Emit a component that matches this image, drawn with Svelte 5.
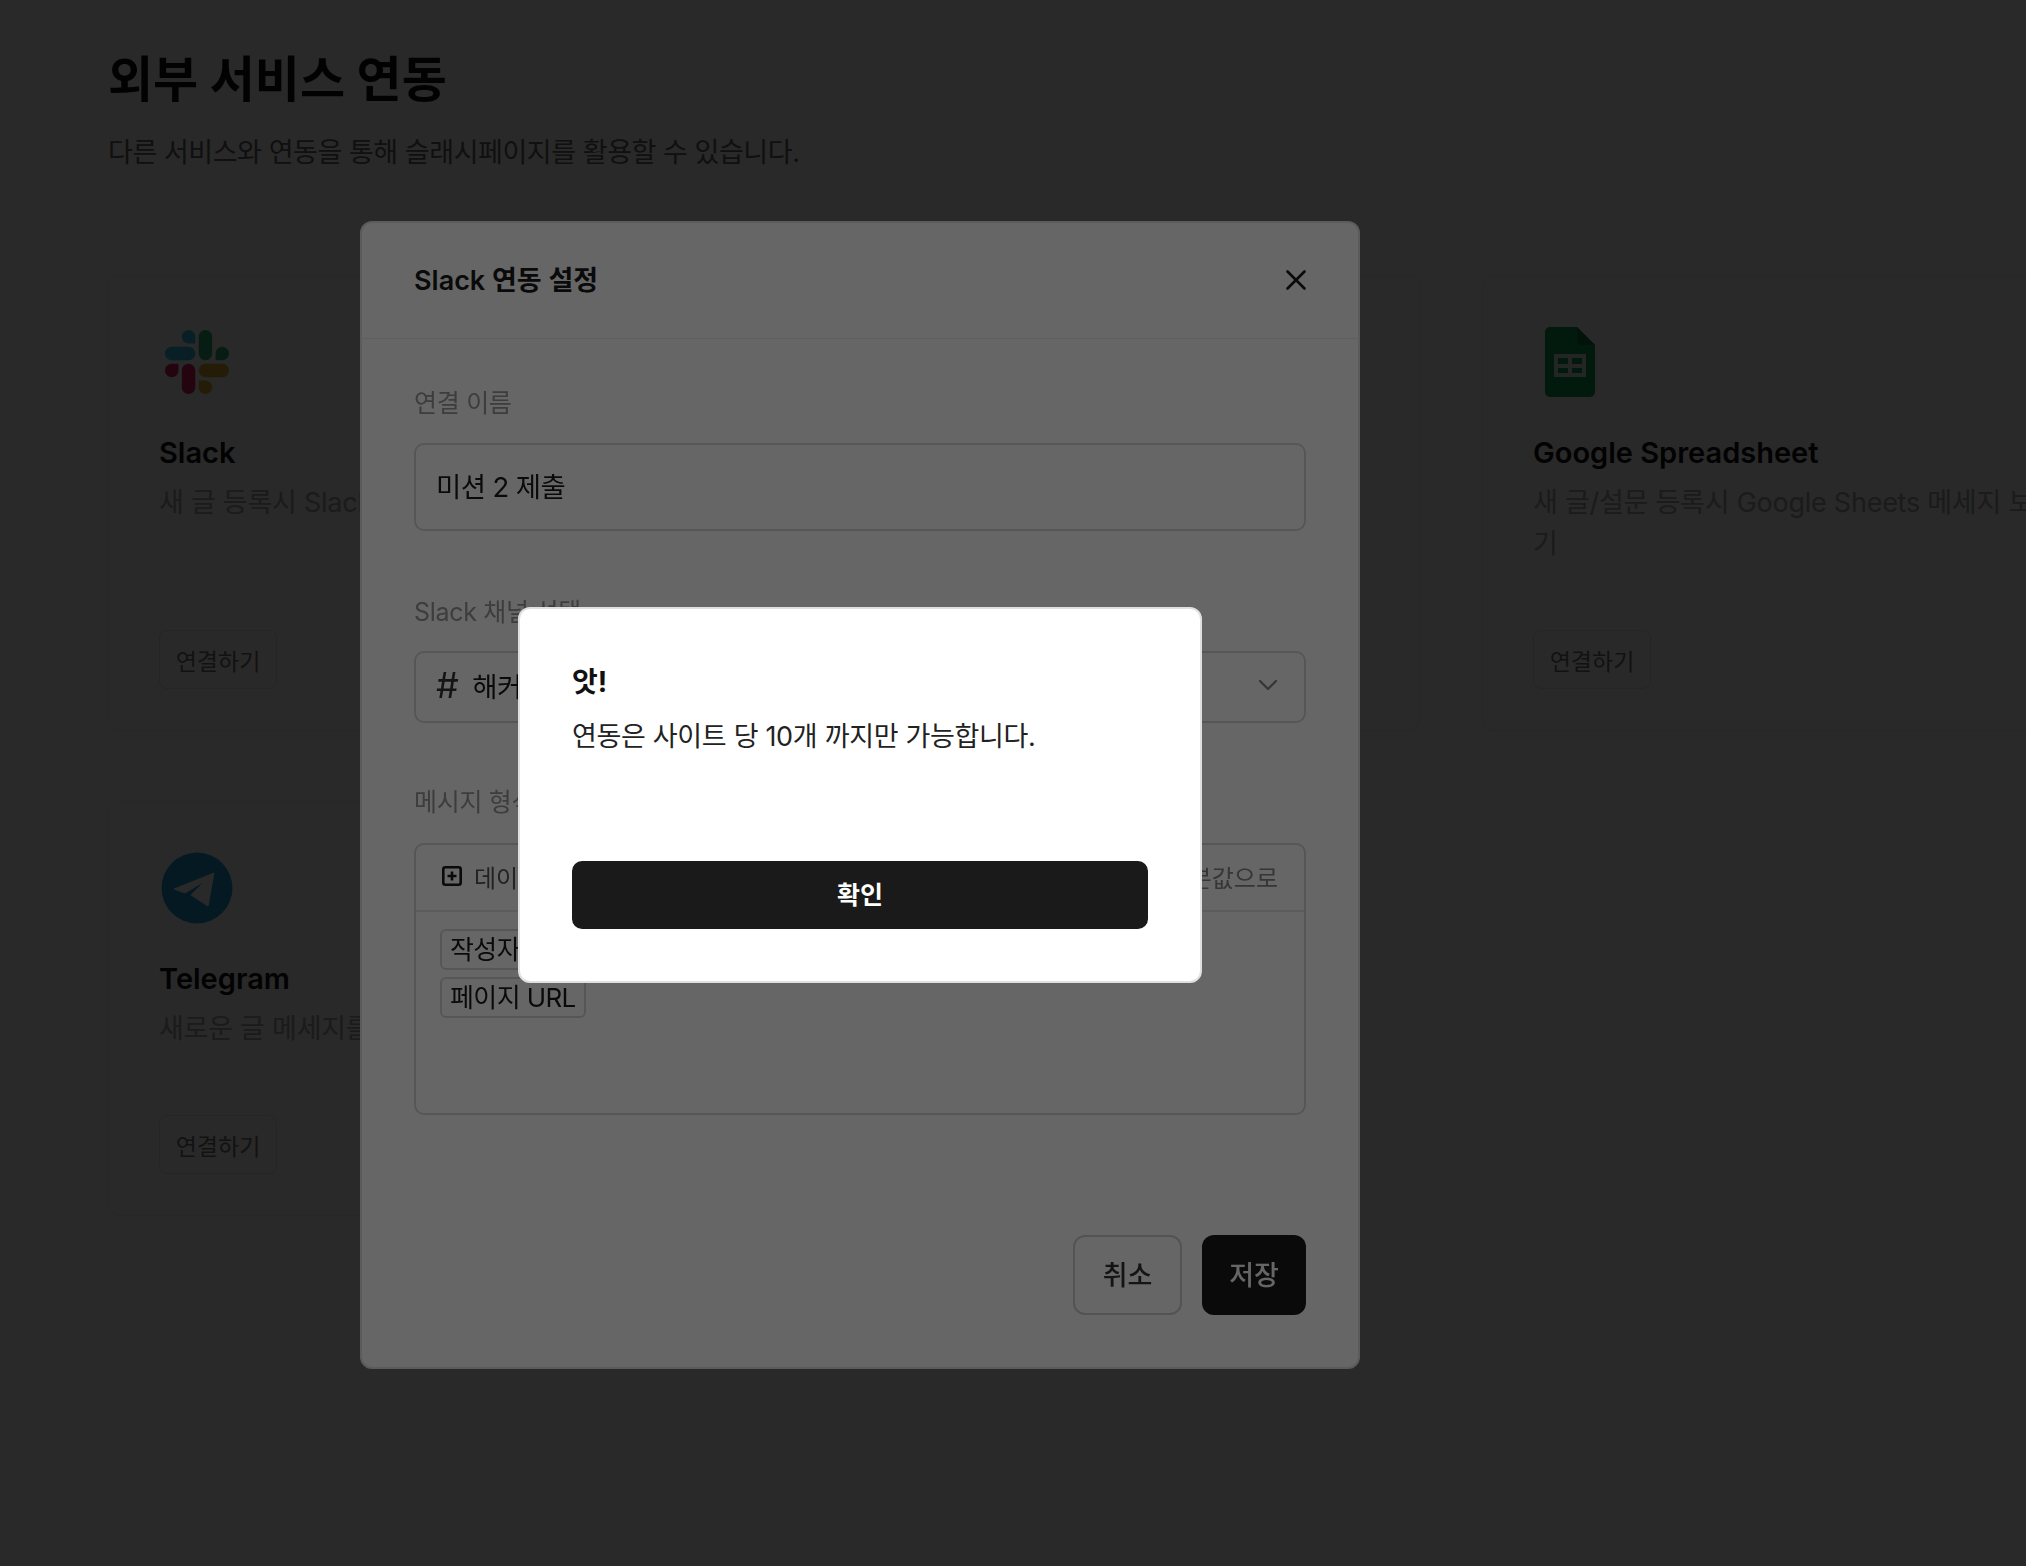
<script>
  const integrations = [
    { name: 'Slack', icon: 'slack', desc: '새 글 등록시 Slack 메세지 보내기' },
    { name: '', icon: '', desc: '' },
    { name: 'Google Spreadsheet', icon: 'sheets', desc: '새 글/설문 등록시 Google Sheets 메세지 보내기' },
    { name: 'Telegram', icon: 'telegram', desc: '새로운 글 메세지를 Telegram으로 보내기' }
  ];
</script>

<div class="page">
  <h1>외부 서비스 연동</h1>
  <p class="subtitle">다른 서비스와 연동을 통해 슬래시페이지를 활용할 수 있습니다.</p>

  <div class="grid">
    {#each integrations as item}
      <section class="card">
        {#if item.name}
          <div class="logo">
            {#if item.icon === 'slack'}
              <svg width="64" height="64" viewBox="0 0 122.8 122.8">
                <path d="M25.8 77.6c0 7.1-5.8 12.9-12.9 12.9S0 84.7 0 77.6s5.8-12.9 12.9-12.9h12.9v12.9z" fill="#E01E5A"/>
                <path d="M32.3 77.6c0-7.1 5.8-12.9 12.9-12.9s12.9 5.8 12.9 12.9v32.3c0 7.1-5.8 12.9-12.9 12.9s-12.9-5.8-12.9-12.9V77.6z" fill="#E01E5A"/>
                <path d="M45.2 25.8c-7.1 0-12.9-5.8-12.9-12.9S38.1 0 45.2 0s12.9 5.8 12.9 12.9v12.9H45.2z" fill="#36C5F0"/>
                <path d="M45.2 32.3c7.1 0 12.9 5.8 12.9 12.9s-5.8 12.9-12.9 12.9H12.9C5.8 58.1 0 52.3 0 45.2s5.8-12.9 12.9-12.9h32.3z" fill="#36C5F0"/>
                <path d="M97 45.2c0-7.1 5.8-12.9 12.9-12.9s12.9 5.8 12.9 12.9-5.8 12.9-12.9 12.9H97V45.2z" fill="#2EB67D"/>
                <path d="M90.5 45.2c0 7.1-5.8 12.9-12.9 12.9s-12.9-5.8-12.9-12.9V12.9C64.7 5.8 70.5 0 77.6 0s12.9 5.8 12.9 12.9v32.3z" fill="#2EB67D"/>
                <path d="M77.6 97c7.1 0 12.9 5.8 12.9 12.9s-5.8 12.9-12.9 12.9-12.9-5.8-12.9-12.9V97h12.9z" fill="#ECB22E"/>
                <path d="M77.6 90.5c-7.1 0-12.9-5.8-12.9-12.9s5.8-12.9 12.9-12.9h32.3c7.1 0 12.9 5.8 12.9 12.9s-5.8 12.9-12.9 12.9H77.6z" fill="#ECB22E"/>
              </svg>
            {:else if item.icon === 'sheets'}
              <svg class="sheets" width="50" height="70" viewBox="0 0 50 70">
                <path d="M5 0H32L50 18V65a5 5 0 0 1-5 5H5a5 5 0 0 1-5-5V5a5 5 0 0 1 5-5z" fill="#0F9D58"/>
                <path d="M32 0L50 18H37a5 5 0 0 1-5-5z" fill="#0B7A44"/>
                <path d="M9 27H41V50H9z" fill="#fff" opacity=".85"/>
                <path d="M13 31H23V37H13zM27 31H37V37H27zM13 41H23V46H13zM27 41H37V46H27z" fill="#0F9D58"/>
              </svg>
            {:else}
              <svg width="72" height="72" viewBox="0 0 72 72">
                <circle cx="36" cy="36" r="35.5" fill="#229ED9"/>
                <path d="M13 37L53 21L47 54L30 43L44 29L24 41z" fill="#fff" stroke="#fff" stroke-width="1" stroke-linejoin="round"/>
              </svg>
            {/if}
          </div>
          <h2>{item.name}</h2>
          <p class="desc">{item.desc}</p>
          <button class="connect">연결하기</button>
        {/if}
      </section>
    {/each}
  </div>
</div>

<div class="overlay">
  <div class="stage">
    <div class="modal">
      <header class="modal-head">
        <h3>Slack 연동 설정</h3>
        <svg class="close" width="24" height="24" viewBox="0 0 24 24" fill="none" stroke="#1a1a1a" stroke-width="2.600" stroke-linecap="round">
          <path d="M3.500 3.500L20.500 20.500M20.500 3.500L3.500 20.500"/>
        </svg>
      </header>
      <div class="modal-body">
        <div class="label first">연결 이름</div>
        <div class="field name">미션 2 제출</div>

        <div class="label second">Slack 채널 선택</div>
        <div class="field select">
          <span class="channel"><span class="hash">#</span>해커톤</span>
          <svg width="22" height="14" viewBox="0 0 22 14" fill="none" stroke="#8a8a8a" stroke-width="2.400" stroke-linecap="round" stroke-linejoin="round">
            <path d="M3 3L11 11L19 3"/>
          </svg>
        </div>

        <div class="label third">메시지 형식</div>
        <div class="editor">
          <div class="toolbar">
            <span class="add">
              <svg width="20" height="20" viewBox="0 0 20 20" fill="none" stroke="#1a1a1a" stroke-width="2.600">
                <rect x="1.300" y="1.300" width="17.400" height="17.400" rx="2"/>
                <path d="M10 5.500V14.500M5.500 10H14.500"/>
              </svg>
              데이터 추가
            </span>
            <span class="reset">기본값으로</span>
          </div>
          <div class="chips">
            <span class="chip">작성자</span>
            <span class="chip">페이지 URL</span>
          </div>
        </div>
      </div>
      <footer class="modal-foot">
        <button class="cancel">취소</button>
        <button class="save">저장</button>
      </footer>
    </div>
  </div>
</div>

<div class="overlay">
  <div class="stage">
    <div class="alert">
      <div class="alert-title">앗!</div>
      <p class="alert-text">연동은 사이트 당 10개 까지만 가능합니다.</p>
      <button class="ok">확인</button>
    </div>
  </div>
</div>

<style>
  :global(html), :global(body) {
    margin: 0;
    height: 100%;
    overflow: hidden;
    background: #fff;
  }
  :global(body) {
    font-family: Inter, "Noto Sans CJK KR", sans-serif;
    color: #1a1a1a;
  }
  h1, h2, h3, p { margin: 0; }
  button { font-family: inherit; cursor: pointer; }

  .page {
    padding: 48px 0 0 108px;
    width: 2100px;
    box-sizing: border-box;
  }
  h1 {
    font-size: 49px;
    line-height: 64px;
    font-weight: 700;
    color: #111;
  }
  .subtitle {
    margin-top: 21px;
    font-size: 27px;
    line-height: 40px;
    letter-spacing: -0.45px;
    color: #666;
  }
  .grid {
    margin-top: 102px;
    display: grid;
    grid-template-columns: repeat(3, 625px);
    column-gap: 62px;
    row-gap: 70px;
    align-items: stretch;
  }
  .card {
    box-sizing: border-box;
    border: 1px solid #f6f6f6;
    border-radius: 12px;
    padding: 50px 38px 41px 50px;
    display: flex;
    flex-direction: column;
    align-items: flex-start;
  }
  .logo {
    width: 72px;
    height: 72px;
    margin-left: 2px;
    display: flex;
    align-items: center;
    justify-content: center;
  }
  .sheets { margin-left: -2px; }
  h2 {
    margin-top: 35px;
    font-size: 29px;
    line-height: 40px;
    font-weight: 600;
    color: #111;
  }
  .desc {
    margin-top: 9px;
    margin-bottom: 66px;
    font-size: 27px;
    line-height: 41px;
    letter-spacing: -0.25px;
    color: #aaa;
  }
  .connect {
    margin-top: auto;
    width: 118px;
    height: 59px;
    padding: 0;
    border: 1px solid #e6e6e6;
    border-radius: 8px;
    background: #fff;
    color: #777;
    font-size: 23px;
  }

  .overlay {
    position: fixed;
    inset: 0;
    background: rgba(0, 0, 0, 0.6);
  }
  .stage {
    width: 1720px;
    height: 1590px;
    display: flex;
    align-items: center;
    justify-content: center;
  }
  .modal {
    box-sizing: border-box;
    width: 1000px;
    height: 1148px;
    background: #fff;
    border: 2px solid #e4e4e4;
    border-radius: 12px;
    display: flex;
    flex-direction: column;
  }
  .modal-head {
    box-sizing: border-box;
    height: 116px;
    flex: none;
    padding: 0 52px;
    border-bottom: 1px solid #ececec;
    display: flex;
    align-items: center;
    justify-content: space-between;
  }
  h3 {
    font-size: 27px;
    line-height: 40px;
    font-weight: 600;
  }
  .close { margin: -1px -2px 0 0; }
  .modal-body {
    padding: 0 52px;
  }
  .label {
    font-size: 25px;
    line-height: 36px;
    letter-spacing: -0.3px;
    color: #999;
  }
  .label.first { margin-top: 46px; }
  .label.second { margin-top: 63px; }
  .label.third { margin-top: 61px; }
  .field {
    box-sizing: border-box;
    border: 2px solid #d8d8d8;
    border-radius: 10px;
    padding: 0 20px 4px;
    font-size: 27.500px;
    letter-spacing: -0.6px;
    display: flex;
    align-items: center;
  }
  .name { margin-top: 22px; height: 88px; }
  .select {
    margin-top: 21px;
    height: 72px;
    justify-content: space-between;
    padding-right: 25px;
  }
  .channel {
    display: flex;
    align-items: center;
    gap: 14px;
  }
  .hash {
    font-size: 36px;
    line-height: 40px;
    font-weight: 400;
    color: #333;
  }
  .editor {
    box-sizing: border-box;
    margin-top: 23px;
    height: 272px;
    border: 2px solid #d8d8d8;
    border-radius: 10px;
  }
  .toolbar {
    box-sizing: border-box;
    height: 67px;
    padding: 0 26px 3px;
    border-bottom: 2px solid #e6e6e6;
    display: flex;
    align-items: center;
    justify-content: space-between;
    font-size: 24px;
  }
  .add {
    display: flex;
    align-items: center;
    gap: 12px;
    color: #555;
  }
  .reset { color: #888; }
  .chips {
    padding: 17px 24px;
    display: flex;
    flex-direction: column;
    align-items: flex-start;
    gap: 7px;
  }
  .chip {
    box-sizing: border-box;
    height: 41px;
    padding: 0 8px;
    border: 2px solid #d8d8d8;
    border-radius: 6px;
    font-size: 26px;
    line-height: 38px;
    letter-spacing: -0.6px;
    color: #1a1a1a;
  }
  .modal-foot {
    margin-top: auto;
    padding: 0 52px 52px;
    display: flex;
    justify-content: flex-end;
    gap: 20px;
  }
  .cancel, .save {
    height: 80px;
    border-radius: 12px;
    padding: 0 0 3px;
    font-size: 27px;
    font-weight: 500;
  }
  .cancel {
    width: 109px;
    background: #fff;
    border: 2px solid #cfcfcf;
    color: #333;
  }
  .save {
    width: 104px;
    background: #1a1a1a;
    border: none;
    color: #fff;
  }
  .alert {
    box-sizing: border-box;
    width: 684px;
    height: 376px;
    padding: 53px 52px 52px;
    background: #fff;
    border: 2px solid #e0e0e0;
    border-radius: 12px;
    display: flex;
    flex-direction: column;
  }
  .alert-title {
    font-size: 28px;
    line-height: 40px;
    font-weight: 700;
    color: #111;
  }
  .alert-text {
    margin-top: 15px;
    font-size: 27px;
    line-height: 40px;
    letter-spacing: -0.32px;
    color: #222;
  }
  .ok {
    margin-top: auto;
    height: 68px;
    border: none;
    border-radius: 10px;
    background: #1a1a1a;
    color: #fff;
    padding: 0 0 5px;
    font-size: 25px;
    font-weight: 600;
  }
</style>
